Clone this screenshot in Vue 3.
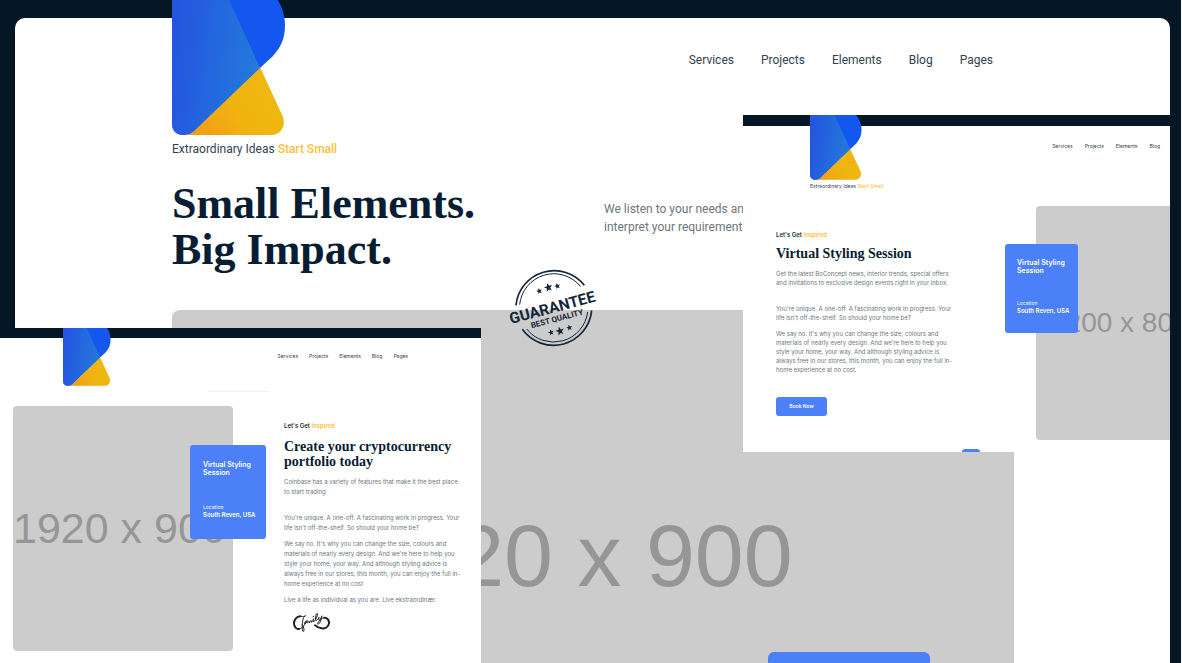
<script setup>
import { h } from 'vue'

const mainNav = ['Services', 'Projects', 'Elements', 'Blog', 'Pages']
const shortNav = mainNav.slice(0, 4)

const stylingLead = ['Get the latest BoConcept news, interior trends, special offers', 'and invitations to exclusive design events right in your inbox.']
const coinLead = ['Coinbase has a variety of features that make it the best place', 'to start trading']
const unique = ["You're unique. A one-off. A fascinating work in progress. Your", "life isn't off-the-shelf. So should your home be?"]
const sayNo = [
  "We say no. It's why you can change the size, colours and",
  "materials of nearly every design. And we're here to help you",
  'style your home, your way. And although styling advice is',
  'always free in our stores, this month, you can enjoy the full in-',
]
const stylingCopy = [stylingLead, unique, [...sayNo, 'home experience at no cost.']]
const coinCopy = [coinLead, unique, [...sayNo, 'home experience at no cost'], ['Live a life as individual as you are. Live ekstraordinær.']]

const Lines = (props) => h('p', props.lines.flatMap((line, i) => (i ? [h('br'), line] : [line])))
Lines.props = ['lines']

const Logo = (props) =>
  h('svg', { viewBox: '0 -7 114 142', role: 'img', 'aria-label': 'Logo' }, [
    h('defs', [
      h('linearGradient', { id: props.uid + 'b', x1: 0, y1: 0.3, x2: 1, y2: 0.5 }, [
        h('stop', { offset: 0, 'stop-color': '#2454e0' }),
        h('stop', { offset: 1, 'stop-color': '#237bdb' }),
      ]),
      h('linearGradient', { id: props.uid + 'y', x1: 0, y1: 0.8, x2: 1, y2: 0.4 }, [
        h('stop', { offset: 0, 'stop-color': '#f39a16' }),
        h('stop', { offset: 0.5, 'stop-color': '#efb310' }),
        h('stop', { offset: 1, 'stop-color': '#efb810' }),
      ]),
    ]),
    h('path', { fill: '#1457ee', d: 'M0 -7H101Q113 8 113 25C113 38 109 47 101 56L88 68L21 132Q17 135 12 135Q0 135 0 123Z' }),
    h('path', { fill: `url(#${props.uid}y)`, d: 'M88 67L111 117C114 126 109 135 99 135H12Q17 135 21 132Z' }),
    h('path', { fill: `url(#${props.uid}b)`, d: 'M0 -7H54L88 68L21 132Q17 135 12 135Q0 135 0 123Z' }),
  ])
Logo.props = ['uid']

const star = 'M0 -10L3 -3L10 -3L4 2L6 9L0 5L-6 9L-4 2L-10 -3L-3 -3Z'
const stars = [
  'translate(148 122) rotate(-15) scale(.9)',
  'translate(175 111) rotate(-15) scale(1.3)',
  'translate(202 107) rotate(-15) scale(.9)',
  'translate(183 246) rotate(-15) scale(.9)',
  'translate(210 242) rotate(-15) scale(1.3)',
  'translate(238 232) rotate(-15) scale(.9)',
]
</script>

<template>
  <div class="stage">
    <main class="page">
      <div class="sheet">
        <header class="head">
          <div class="brand">
            <Logo uid="m" class="logo" />
            <p class="tagline">Extraordinary Ideas <b>Start Small</b></p>
          </div>
          <nav class="nav"><a v-for="n in mainNav" :key="n" href="#">{{ n }}</a></nav>
        </header>
        <section class="hero">
          <h1>Small Elements.<br />Big Impact.</h1>
          <p class="intro">We listen to your needs and<br />interpret your requirements</p>
        </section>
        <div class="picture cover">
          <span>1920 x 900</span>
          <div class="ribbon"></div>
        </div>
      </div>
      <svg class="stamp" viewBox="60 50 261 249" role="img" aria-label="Guarantee best quality">
        <g fill="none" stroke="#142537">
          <path stroke-width="5" d="M78 165A115 115 0 0 1 283 105M97 237A115 115 0 0 0 305 180" />
          <path stroke-width="3" d="M89 163A103 103 0 0 1 272 109M110 236A103 103 0 0 0 293 185" />
        </g>
        <g fill="#142537">
          <path v-for="s in stars" :key="s" :d="star" :transform="s" />
          <text class="big" text-anchor="middle" transform="translate(191 187) rotate(-15)">GUARANTEE</text>
          <text class="sub" text-anchor="middle" transform="translate(203 213) rotate(-15)">BEST QUALITY</text>
        </g>
      </svg>
    </main>

    <section class="panel styling">
      <div class="sheet">
        <header class="head">
          <div class="brand">
            <Logo uid="s" class="logo" />
            <p class="tagline">Extraordinary Ideas <b>Start Small</b></p>
          </div>
          <nav class="nav"><a v-for="n in shortNav" :key="n" href="#">{{ n }}</a></nav>
        </header>
        <div class="body">
          <article class="copy">
            <h3>Let's Get <b>Inspired</b></h3>
            <h2>Virtual Styling Session</h2>
            <Lines v-for="(c, i) in stylingCopy" :key="i" :lines="c" />
            <button type="button">Book Now</button>
          </article>
          <div class="media">
            <div class="picture"><span>1200 x 800</span></div>
            <aside class="card">
              <h4>Virtual Styling<br />Session</h4>
              <small>Location</small>
              <strong>South Reven, USA</strong>
            </aside>
          </div>
        </div>
      </div>
      <div class="tab"></div>
    </section>

    <section class="panel coin">
      <div class="sheet">
        <header class="head">
          <Logo uid="c" class="logo" />
          <nav class="nav"><a v-for="n in mainNav" :key="n" href="#">{{ n }}</a></nav>
        </header>
        <div class="rule"></div>
        <div class="body">
          <div class="media">
            <div class="picture"><span>1920 x 900</span></div>
            <aside class="card">
              <h4>Virtual Styling<br />Session</h4>
              <small>Location</small>
              <strong>South Reven, USA</strong>
            </aside>
          </div>
          <article class="copy">
            <h3>Let's Get <b>Inspired</b></h3>
            <h2>Create your cryptocurrency<br />portfolio today</h2>
            <Lines v-for="(c, i) in coinCopy" :key="i" :lines="c" />
            <svg class="sign" viewBox="0 0 111 63" role="img" aria-label="Signature">
              <g fill="none" stroke="#222" stroke-linecap="round" stroke-linejoin="round">
                <path stroke-width="6" d="M22 13C10 13 3 24 3 34C3 45 10 52 18 51" />
                <path stroke-width="6" d="M94 17C103 17 109 25 108 34C106 45 96 50 86 49C78 48 72 45 66 40" />
                <path stroke-width="3" d="M22 13C38 16 42 8 34 13C28 20 26 48 29 57C33 63 36 50 28 38M18 51C32 49 36 34 39 29C35 27 32 37 37 35C40 33 42 26 42 25C42 32 42 36 45 31C48 24 50 27 49 33C53 24 56 23 55 31C60 29 61 22 62 20C59 28 61 32 65 27C71 19 76 5 72 4C68 7 65 24 70 26C75 24 77 19 78 16C75 24 80 25 84 17C88 10 88 8 85 20C82 33 73 42 74 34C77 27 85 18 94 17M60 14L62 13" />
              </g>
            </svg>
          </article>
        </div>
      </div>
    </section>
  </div>
</template>

<style>
body { margin: 0; background: #fff; }
</style>

<style scoped>
.stage {
  position: relative;
  height: 100vh;
  margin-right: 1px;
  overflow: hidden;
  background: #051624;
  color: #33414f;
  font-family: Inter, "Liberation Sans", sans-serif;
}
h1, h2, h3, h4, p { margin: 0; }
a { color: inherit; text-decoration: none; }
.logo { display: block; }
.sheet { background: #fff; }
.head { display: flex; align-items: flex-start; justify-content: space-between; }
.nav { display: flex; }
.tagline { white-space: nowrap; }
.tagline b { color: #fcbf3a; font-weight: 500; }
h1, h2 { color: #071d33; font-family: "Liberation Serif", serif; font-weight: 700; white-space: nowrap; }
.picture { display: flex; overflow: hidden; align-items: center; background: #ccc; color: #969696; font-family: "Liberation Sans", sans-serif; white-space: nowrap; }

.page { height: 100%; padding-top: 18px; box-sizing: border-box; font-family: Roboto, "Liberation Sans", sans-serif; }
.page > .sheet { display: flex; flex-direction: column; height: 100%; margin: 0 11px 0 15px; border-radius: 10px 10px 0 0; }
.page .head { padding: 0 177px 0 157px; }
.page .logo { width: 114px; margin-top: -25px; }
.page .tagline { margin-top: 6px; font-size: 12px; line-height: 16px; }
.page .nav { gap: 27px; padding-top: 34px; font-size: 12px; line-height: 16px; }
.hero { display: grid; grid-template-columns: 432px 1fr; padding: 24px 0 37px 157px; }
h1 { font-size: 44px; line-height: 46px; }
.intro { padding-top: 19px; color: #6d757d; font-size: 12px; line-height: 18px; }
.cover { position: relative; flex: 1; align-items: flex-start; justify-content: center; margin: 0 156px 0 157px; padding: 193px 36px 0 0; border-radius: 8px 0 0 0; font-size: 88px; line-height: 105px; }
.cover .ribbon { position: absolute; right: 84px; bottom: 0; width: 162px; height: 11px; border-radius: 6px 6px 0 0; background: #4b80f8; }
.stamp { position: absolute; left: 510px; top: 267px; width: 87px; height: 83px; overflow: visible; font-weight: 700; }
.stamp .big { font-size: 46px; }
.stamp .sub { font-size: 24px; }

.panel { position: absolute; overflow: hidden; background: #051624; font-size: 6px; }
.panel .nav { font-size: 5px; line-height: 8px; }
.body { display: grid; }
.copy { color: #6d757d; white-space: nowrap; }
.copy h3 { color: #17293a; font-size: 6px; line-height: 10px; font-weight: 600; }
.copy h3 b { color: #fcbf3a; font-weight: 600; }
.copy h2 { font-size: 14px; }
.media { position: relative; }
.media .picture { border-radius: 4px; }
.card { position: absolute; display: flex; flex-direction: column; box-sizing: border-box; border-radius: 3px; background: #4b80f8; color: #fff; white-space: nowrap; }
.card h4 { font-size: 7px; line-height: 8px; font-weight: 600; }
.card small { margin-top: auto; font-size: 5px; line-height: 8px; }
.card strong { font-size: 6px; line-height: 8px; font-weight: 600; }

.styling { left: 743px; right: 11px; top: 115px; height: 337px; }
.styling .sheet { height: 100%; margin-top: 11px; }
.styling .head { padding: 0 10px 0 67px; }
.styling .logo { width: 52px; margin-top: -11px; }
.styling .tagline { margin-top: 2px; font-size: 5px; line-height: 8px; }
.styling .nav { gap: 12px; padding-top: 16px; }
.styling .body { grid-template-columns: 262px 1fr; }
.styling .copy { padding: 40px 0 0 33px; }
.styling h2 { margin-top: 6px; line-height: 16px; }
.styling .copy p { margin-top: 7px; line-height: 9px; }
.styling .copy p:nth-of-type(2) { margin-top: 17px; }
.styling button { display: block; width: 51px; height: 19px; margin-top: 23px; padding: 0; border: 0; border-radius: 3px; background: #4b80f8; color: #fff; font: 600 5px Inter, sans-serif; }
.styling .media { padding: 16px 0 0 31px; }
.styling .picture { height: 234px; padding-left: 14px; border-radius: 4px 0 0 4px; font-size: 28px; }
.styling .card { left: 0; top: 54px; width: 73px; height: 89px; padding: 15px 12px 18px; }
.tab { position: absolute; left: 219px; bottom: 0; width: 18px; height: 3px; border-radius: 3px 3px 0 0; background: #4b80f8; }

.coin { left: 0; top: 328px; bottom: 0; width: 481px; }
.coin .sheet { height: 100%; margin-top: 10px; }
.coin .head { height: 48px; padding: 0 73px 0 63px; }
.coin .logo { width: 48px; margin-top: -12px; }
.coin .nav { gap: 11px; padding-top: 14px; }
.rule { height: 1px; width: 62px; margin: 5px 0 0 208px; background: #f0f0f0; }
.coin .body { grid-template-columns: 284px 1fr; }
.coin .media { padding: 14px 51px 0 13px; }
.coin .picture { height: 245px; font-size: 43px; }
.coin .card { left: 190px; top: 53px; width: 76px; height: 94px; padding: 16px 13px 20px; }
.coin .copy { padding-top: 29px; }
.coin h2 { margin-top: 8px; line-height: 15px; }
.coin .copy p { margin-top: 6px; line-height: 10px; }
.coin .copy p:nth-of-type(1) { margin-top: 8px; }
.coin .copy p:nth-of-type(2) { margin-top: 16px; }
.sign { display: block; width: 37px; height: 21px; margin: 7px 0 0 9px; }
</style>
